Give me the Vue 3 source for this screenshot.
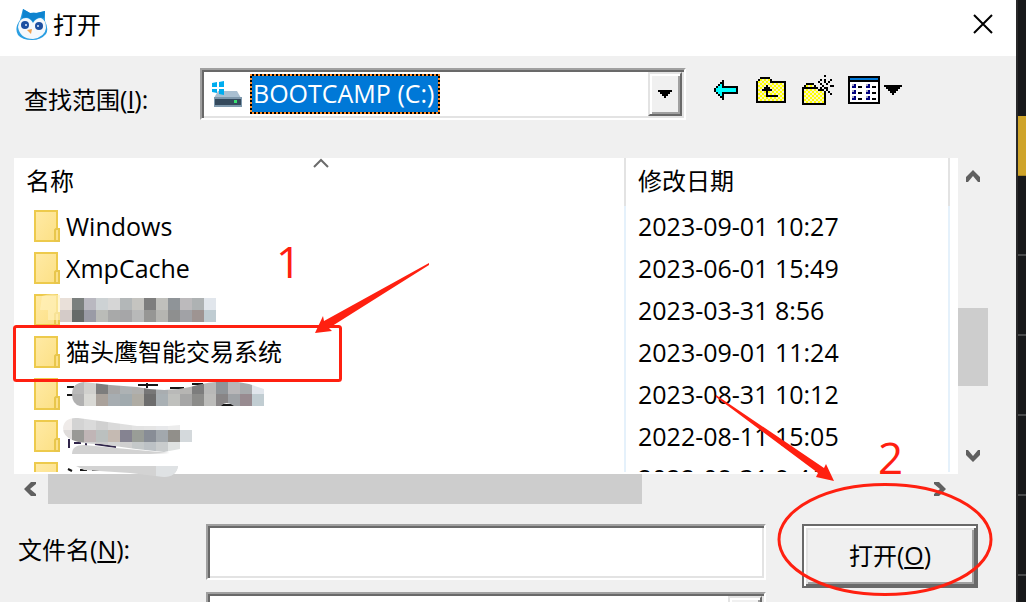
<script setup>
import { ref } from 'vue'

const fileName = ref('')
const drive = ref('c')

const rows = [
  { name: 'Windows', date: '2023-09-01 10:27', latin: true },
  { name: 'XmpCache', date: '2023-06-01 15:49', latin: true },
  { name: '', date: '2023-03-31 8:56' },
  { name: '猫头鹰智能交易系统', date: '2023-09-01 11:24' },
  { name: '', date: '2023-08-31 10:12' },
  { name: '', date: '2022-08-11 15:05' },
  { name: '', date: '2022-08-31 9:41' },
]

const palette = { '#': '#000', c: '#00ffff', b: '#0078d7', n: '#000080', g: '#a9a9c4', w: '#fff' }

const sprites = {
  back: [
    '....#.......',
    '...##.......',
    '..#c#.......',
    '.#cc########',
    '#cccccccccc#',
    '#cccccccccc#',
    '.#cc########',
    '..#c#.......',
    '...##.......',
    '....#.......',
  ],
  up: [
    '..#####........',
    '.#yyyyy#.......',
    '#yyyyyy########',
    '#yyyyyyyyyyyyy#',
    '#yyyy#yyyyyyyy#',
    '#yyy###yyyyyyy#',
    '#yy#####yyyyyy#',
    '#yyyy#yyyyyyyy#',
    '#yyyy#yyyyyyyy#',
    '#yyyy######yyy#',
    '#yyyyyyyyyyyyy#',
    '#yyyyyyyyyyyyy#',
    '###############',
  ],
  create: [
    '...........#....',
    '................',
    '.........#.#..#.',
    '........#..#.#..',
    '..####...#..#...',
    '.#yyyy#...#...##',
    '########.#.##...',
    '#yyyyyyy###.#...',
    '#yyyyyyyyyy#.#..',
    '#yyyyyyyyyy#..#.',
    '#yyyyyyyyyy#....',
    '#yyyyyyyyyy#....',
    '#yyyyyyyyyy#....',
    '#yyyyyyyyyy#....',
    '############....',
  ],
  view: [
    '################',
    '#bbbbbbbbbbbbbb#',
    '################',
    '#wwwwwwwwwwwwww#',
    '#wgnwwwwwgnwwww#',
    '#wnnw##wwnnw##w#',
    '#wwwwwwwwwwwwww#',
    '#wgnwwwwwgnwwww#',
    '#wnnw##wwnnw##w#',
    '#wwwwwwwwwwwwww#',
    '#wgnwwwwwgnwwww#',
    '#wnnw##wwnnw##w#',
    '#wwwwwwwwwwwwww#',
    '################',
  ],
}

const tools = [
  { id: 'back', label: '后退' },
  { id: 'up', label: '向上一级' },
  { id: 'create', label: '新建文件夹' },
  { id: 'view', label: '查看' },
].map((tool) => {
  const art = sprites[tool.id]
  const cells = []
  art.forEach((line, y) => {
    ;[...line].forEach((ch, x) => {
      if (ch === '.') return
      const fill = ch === 'y' ? ((x + y) % 2 ? '#ffff00' : '#f7f3c4') : palette[ch]
      cells.push({ x, y, fill })
    })
  })
  return { ...tool, cells, w: art[0].length, h: art.length }
})

const blocks = [
  { x: 60, y: 298, c: ['#e9e0d9', '#7b807e', '#b9b8c0', '#cdd2d4', '#d6d6d6', '#b3b7b8', '#c5c4c0', '#7e7e7e', '#c0c0bc', '#8f9498', '#bcbabc', '#aeb2b3', '#e1e6ec'] },
  { x: 60, y: 310, c: ['#d4cbc8', '#666a69', '#9a9ba6', '#babcb8', '#a8a9a9', '#a6a6a8', '#b8b9b9', '#969694', '#b5b5b1', '#8e8f8f', '#a1a2a6', '#9e9492', '#bfccd2'] },
]
const row5 = [
  ['#b9b9b9', '#d0d0cd', '#7d7d7d', '#a6a6a6', '#adb2b4', '#b0b0ae', '#777', '#a9adb0', '#b9b9b8', '#b6b5b3', '#7d7d7d', '#b8b8b7', '#8f9498', '#b8b6b8', '#a7abad', '#e1e6ec'],
  ['#b1b1b1', '#d9d9d5', '#aaa29b', '#a7adb1', '#a1aaae', '#afaca4', '#6d6d6d', '#a9b0b4', '#bfc0bd', '#a6a6a6', '#8c8c8a', '#bcbcba', '#888586', '#9fa2a6', '#988b90', '#c1cdd2'],
]
const row6 = [
  ['#efebe9', '#d3d3d3', '#dadada', '#d0d0d0', '#d9d9d9', '#dfdfdf', '#e3e3e3', '#e5e5e5', '#e7e8ea', '#ececec', '#dde2e3'],
  ['#dfdcdb', '#999996', '#c0b5b6', '#bbc0bf', '#c5bab2', '#858391', '#999d97', '#888d96', '#a2a8ad', '#918f8a', '#d4d9dc'],
  ['#ddd', '#c6c6c6', '#d1d1d1', '#cbcbcb', '#d4d4d4', '#cfcfcf', '#c4c8c9', '#bcc1c5', '#c9cccd', '#dfe2e1', '#fff'],
]
</script>

<template>
  <div class="screen">
    <main class="dialog">
      <header class="title">
        <svg class="owl" viewBox="0 0 32 32" aria-hidden="true">
          <path d="M7 1 L14 5 Q18 4 21 5 L29 3 L29 13 Q33 21 30 26 Q25 32 16 32 Q6 32 2 27 Q-2 20 4 12Z" fill="#2b9fe2" />
          <path d="M7 1 L14 5 L20 5 L29 3 L28 10 Q21 8 17 14 Q12 7 6 11Z" fill="#0d83cf" />
          <path d="M2 19 Q3 10 10 10 Q14 10 17 15 Q20 10 25 10 Q30 12 30 20 Q29 29 17 31 Q4 31 2 19Z" fill="#f4f8fc" />
          <circle cx="9" cy="17" r="4" fill="#1c4fa1" />
          <circle cx="23" cy="18" r="4" fill="#1c4fa1" />
          <circle cx="10" cy="17" r="1" fill="#dbeaff" />
          <circle cx="22" cy="18" r="1" fill="#dbeaff" />
          <path d="M11 22 L16 21 L15 26Z" fill="#f0a04d" />
        </svg>
        <h1>打开</h1>
        <button class="close" aria-label="关闭">
          <svg viewBox="0 0 20 20"><path d="M1 1 L19 19 M19 1 L1 19" stroke="#000" stroke-width="2" fill="none" /></svg>
        </button>
      </header>

      <section class="lookup">
        <label for="drive">查找范围<span class="key">(<u>I</u>):</span></label>
        <div class="sunken combo">
          <svg class="disk" viewBox="0 0 30 26" aria-hidden="true">
            <path d="M6 10 H25 L29 17 H2Z" fill="#a9bfd1" />
            <rect x="2" y="16" width="28" height="10" fill="#7e98ac" />
            <rect x="3" y="18" width="26" height="6" fill="#34495c" />
            <rect x="22" y="19" width="3" height="3" fill="#39e06f" />
            <path d="M0 2 L5 1 V6 H0Z M7 1 L12 0 V6 H7Z M0 8 H5 V12 L0 11Z M7 8 H12 V14 L7 13Z" fill="#00adef" />
          </svg>
          <span class="focus">
            <select id="drive" v-model="drive">
              <option value="c">BOOTCAMP (C:)</option>
            </select>
          </span>
          <button class="drop" aria-label="展开">
            <svg viewBox="0 0 14 8"><path d="M0 0 H14 V2 H12 V4 H10 V6 H8 V8 H6 V6 H4 V4 H2 V2 H0Z" /></svg>
          </button>
        </div>
        <nav class="tools">
          <button v-for="t in tools" :key="t.id" :class="t.id" :aria-label="t.label">
            <svg :width="t.w * 2" :height="t.h * 2" :viewBox="`0 0 ${t.w} ${t.h}`" shape-rendering="crispEdges">
              <rect v-for="(p, i) in t.cells" :key="i" :x="p.x" :y="p.y" width="1" height="1" :fill="p.fill" />
            </svg>
            <svg v-if="t.id === 'view'" class="caret" viewBox="0 0 18 10">
              <path d="M0 0 H18 V2 H16 V4 H14 V6 H12 V8 H10 V10 H8 V8 H6 V6 H4 V4 H2 V2 H0Z" />
            </svg>
          </button>
        </nav>
      </section>

      <section class="browser">
        <div class="list">
          <table>
            <colgroup><col /><col class="c-date" /><col class="c-rest" /></colgroup>
            <thead>
              <tr>
                <th class="name-head">
                  名称
                  <svg class="sort" viewBox="0 0 16 10"><path d="M1 9 L8 2 L15 9" fill="none" stroke="#6b6b6b" stroke-width="2" /></svg>
                </th>
                <th>修改日期</th>
                <th class="rest"></th>
              </tr>
            </thead>
            <tbody>
              <tr v-for="r in rows" :key="r.date">
                <td>
                  <div class="file" :class="{ latin: r.latin }">
                    <svg class="folder" viewBox="0 0 26 32">
                      <defs>
                        <linearGradient id="paper" x1="0" y1="0" x2="1" y2="1">
                          <stop offset="0" stop-color="#ffeaa5" />
                          <stop offset="1" stop-color="#fce085" />
                        </linearGradient>
                      </defs>
                      <rect x="1" y="1" width="22" height="30" fill="url(#paper)" stroke="#edca4c" stroke-width="2" />
                      <path d="M21 31 V20 L22 19 H25 V31Z" fill="#fbe08a" stroke="#e8c64c" stroke-width="2" />
                    </svg>
                    <span>{{ r.name }}</span>
                  </div>
                </td>
                <td class="date">{{ r.date }}</td>
                <td class="rest"></td>
              </tr>
            </tbody>
          </table>
        </div>
        <div class="vbar">
          <svg class="chev-v" viewBox="0 0 14 12"><path d="M7 0 L14 7 V12 H12 L7 6 L2 12 H0 V7Z" /></svg>
          <div class="vthumb"></div>
          <svg class="chev-v" viewBox="0 0 14 12"><path d="M7 12 L14 5 V0 H12 L7 6 L2 0 H0 V5Z" /></svg>
        </div>
        <div class="hbar">
          <svg class="chev-h" viewBox="0 0 12 14"><path d="M0 7 L7 0 H12 V2 L6 7 L12 12 V14 H7Z" /></svg>
          <div class="htrack"><div class="hthumb"></div></div>
          <svg class="chev-h" viewBox="0 0 12 14"><path d="M12 7 L5 0 H0 V2 L6 7 L0 12 V14 H5Z" /></svg>
        </div>
      </section>

      <section class="form">
        <label for="file">文件名<span class="key">(<u>N</u>):</span></label>
        <div class="fields">
          <input id="file" v-model="fileName" class="sunken" type="text" />
          <div class="sunken combo types">
            <select aria-label="文件类型"><option></option></select>
            <button class="drop" aria-label="展开类型"></button>
          </div>
        </div>
        <button class="open">打开<span class="key">(<u>O</u>)</span></button>
      </section>

      <svg class="notes" width="1016" height="602" viewBox="0 0 1016 602" aria-hidden="true">
        <defs>
          <clipPath id="smear5"><path d="M72 394 Q72 383 84 382 L110 385 L137 387 Q165 393 190 387 Q222 378 249 384 L264 389 V406 H234 Q226 400 221 406 H80 Q72 404 72 394Z" /></clipPath>
          <clipPath id="smear6"><path d="M63 428 Q64 417 78 418 L137 426 H168 L180 425 V430 H192 V442 H180 V449 L164 452 L136 449 L100 444 Q63 444 63 428Z" /></clipPath>
        </defs>
        <path d="M42 296 Q50 293 60 295 V320 H48 V310 H40Z" fill="#fff1bd" opacity=".65" />
        <g shape-rendering="crispEdges">
          <template v-for="b in blocks" :key="b.y">
            <rect v-for="(c, i) in b.c" :key="i" :x="b.x + i * 12" :y="b.y" width="12" height="12" :fill="c" />
          </template>
        </g>
        <path d="M67 387 H74 M67 395 H73 M138 385 H158 M147 383 V388 M170 388 H184 M192 384 H203 M219 405 H234" stroke="#161616" stroke-width="2" fill="none" />
        <g clip-path="url(#smear5)">
          <template v-for="(line, j) in row5" :key="j">
            <rect v-for="(c, i) in line" :key="i" :x="72 + i * 12" :y="382 + j * 12" width="12" height="12" :fill="c" />
          </template>
        </g>
        <path d="M69 439 V448 M74 443 H81 M86 443 V448 M95 444 L116 447" stroke="#30254a" stroke-width="2" fill="none" />
        <g clip-path="url(#smear6)">
          <template v-for="(line, j) in row6" :key="j">
            <rect v-for="(c, i) in line" :key="i" :x="60 + i * 12" :y="418 + j * 12" width="12" height="12" :fill="c" />
          </template>
        </g>
        <path d="M72 454 Q72 445 84 445 L170 453 L150 454Z" fill="#d2d2d2" />
        <path d="M68 469 L72 471 M80 470 H87 M92 470 H112" stroke="#161616" stroke-width="2" />
        <path d="M76 466 H178 Q176 477 164 477 L130 473 L84 470Z" fill="#d3d3d3" />
        <path d="M132 466 H178 Q176 477 164 477 L156 476 V466Z" fill="#dfe2e4" />
        <g fill="none" stroke="#ff2010" stroke-width="3">
          <rect x="14.5" y="326.5" width="326" height="54" rx="2" />
          <ellipse cx="885" cy="539.5" rx="106" ry="55" />
        </g>
        <g fill="#ff2010">
          <path d="M429 263 L324 321 L323 316 L315 333 L332 331 L329 328 L429 265Z" />
          <path d="M716 395 L824 468 L826 464 L834 481 L816 477 L818 473 L716 397Z" />
          <text x="276" y="278">1</text>
          <text x="878" y="474">2</text>
        </g>
      </svg>
    </main>
    <aside class="backdrop"><div class="gold"></div></aside>
  </div>
</template>

<style>
body {
  margin: 0;
  background: #f0f0f0;
}
</style>

<style scoped>
* {
  box-sizing: border-box;
}
.screen {
  display: flex;
  height: 100vh;
  overflow: hidden;
  font: 24px/32px "Open Sans", "Noto Sans CJK SC", sans-serif;
  color: #000;
}
button,
select,
input {
  font: inherit;
  color: inherit;
  padding: 0;
  margin: 0;
  border: 0;
  border-radius: 0;
  background: none;
}
svg {
  display: block;
  flex: none;
}
u {
  text-decoration-thickness: 2px;
  text-underline-offset: 2px;
}
.dialog {
  position: relative;
  flex: 1;
  min-width: 0;
  background: #f0f0f0;
}
.title {
  display: flex;
  align-items: center;
  height: 56px;
  padding: 0 23px 8px 16px;
  background: #fff;
}
.owl {
  width: 32px;
  height: 32px;
}
h1 {
  flex: 1;
  margin: 2px 0 0 5px;
  font: inherit;
}
.close svg {
  width: 20px;
  height: 20px;
}
.lookup {
  display: flex;
  align-items: flex-start;
  height: 102px;
  padding: 12px 114px 0 24px;
}
.lookup label {
  width: 176px;
  padding-top: 15px;
}
.sunken {
  border: 2px solid;
  border-color: #a0a0a0 #fff #fff #a0a0a0;
  background: #fff;
  box-shadow: inset 2px 2px #696969, inset -2px -2px #e3e3e3;
}
.combo {
  display: flex;
  align-items: center;
  flex: 1;
  height: 52px;
  padding: 2px;
}
.disk {
  width: 30px;
  height: 26px;
  margin: 0 8px 0 8px;
}
.focus {
  padding: 2px;
  background: repeating-conic-gradient(#000 0 25%, #ff8c26 0 50%) 0 0 / 4px 4px;
}
select {
  appearance: none;
  display: block;
}
.focus select {
  width: 186px;
  height: 36px;
  padding: 0 0 2px 1px;
  font-size: 25px;
  line-height: 34px;
  color: #fff;
  background: #0078d7;
}
.drop {
  display: grid;
  place-items: center;
  width: 34px;
  height: 44px;
  margin-left: auto;
  background: #f0f0f0;
  border: 2px solid;
  border-color: #e3e3e3 #696969 #696969 #e3e3e3;
  box-shadow: inset 2px 2px #fff, inset -2px -2px #a0a0a0;
}
.drop svg {
  width: 14px;
  height: 8px;
}
.tools {
  display: flex;
  align-items: center;
  height: 44px;
  gap: 16px;
  padding-left: 28px;
}
.tools button {
  display: flex;
  align-items: center;
}
.tools .up {
  margin-left: 2px;
}
.tools .view {
  margin-left: -2px;
  gap: 4px;
}
.caret {
  width: 18px;
  height: 10px;
}
.browser {
  display: grid;
  grid-template-columns: 1fr 30px;
  padding: 0 28px 0 14px;
}
.list {
  height: 316px;
  overflow: hidden;
  background: #fff;
  border-bottom: 2px solid #fff;
}
table {
  width: 100%;
  table-layout: fixed;
  border-collapse: separate;
  border-spacing: 0;
}
.c-date {
  width: 324px;
}
.c-rest {
  width: 8px;
}
th,
td {
  padding: 0;
  text-align: left;
  font-weight: 400;
}
th {
  height: 48px;
  padding: 0 0 2px 12px;
  border-right: 2px solid #e3e3e3;
}
td {
  height: 42px;
  border-right: 2px solid #e5f1fb;
  vertical-align: top;
}
th.rest,
td.rest {
  padding: 0;
  border: 0;
}
.name-head {
  position: relative;
}
.sort {
  position: absolute;
  top: 0;
  left: 49%;
  width: 16px;
  height: 10px;
}
.file {
  display: flex;
  align-items: center;
  gap: 6px;
  height: 40px;
  padding-left: 20px;
}
.folder {
  width: 26px;
  height: 32px;
}
.date {
  padding-left: 12px;
  line-height: 40px;
}
.date,
.latin,
.key {
  font-size: 25px;
}
.vbar {
  display: flex;
  flex-direction: column;
  align-items: center;
  padding: 12px 0;
}
.chev-v,
.chev-h {
  fill: #606060;
}
.chev-v {
  width: 14px;
  height: 12px;
}
.vthumb {
  width: 100%;
  height: 78px;
  margin: auto 0 64px;
  background: #cdcdcd;
}
.hbar {
  display: flex;
  align-items: center;
  height: 30px;
  padding: 0 12px 0 10px;
}
.chev-h {
  width: 12px;
  height: 14px;
}
.htrack {
  flex: 1;
  padding: 0 12px;
}
.hthumb {
  width: 68%;
  height: 30px;
  background: #cdcdcd;
}
.form {
  display: flex;
  align-items: flex-start;
  padding: 20px 38px 0 18px;
}
.form label {
  width: 188px;
  padding-top: 9px;
}
.fields {
  flex: 1;
  display: grid;
  gap: 12px;
  margin-right: 36px;
}
.fields input {
  width: 100%;
  height: 56px;
  padding: 0 8px;
}
.types select {
  flex: 1;
}
.open {
  width: 176px;
  height: 64px;
  padding-bottom: 2px;
  border: 2px solid #696969;
  background: #f0f0f0;
  box-shadow: inset 2px 2px #fff, inset -2px -2px #696969, inset 4px 4px #e3e3e3, inset -4px -4px #a0a0a0;
}
.notes {
  position: absolute;
  top: 0;
  left: 0;
  pointer-events: none;
}
.notes text {
  font-size: 44px;
}
.backdrop {
  width: 10px;
  padding-top: 116px;
  border-left: 2px solid #29292a;
  background: repeating-linear-gradient(#18191b 0 78px, #48494a 78px 80px) 0 176px no-repeat, #18191b;
}
.gold {
  height: 60px;
  background: #cfa42a;
  border-bottom: 1px solid #a98722;
}
</style>
